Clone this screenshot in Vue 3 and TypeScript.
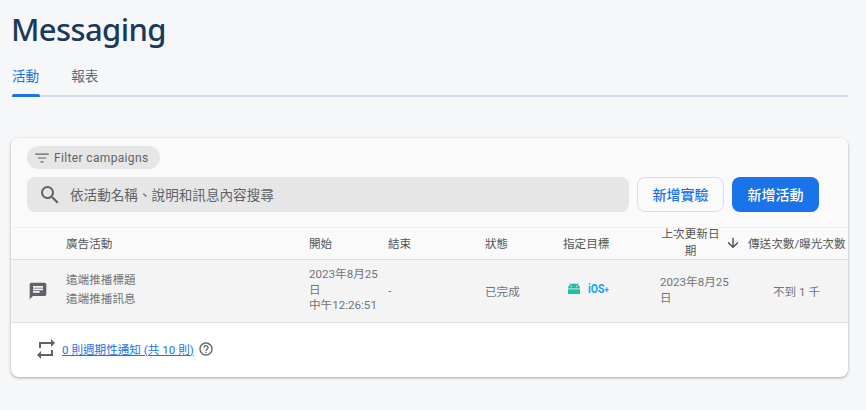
<script setup lang="ts">
const columns: string[] = ['', '廣告活動', '開始', '結束', '狀態', '指定目標']
</script>

<template>
  <div class="page">
    <h1 class="title">Messaging</h1>
    <nav class="tabs">
      <span class="tab active">活動</span>
      <span class="tab">報表</span>
    </nav>
    <section class="card">
      <div class="toolbar">
        <div class="chip">
          <svg width="18" height="18" viewBox="0 0 24 24" fill="#5f6368"><path d="M3 6h18v1.600H3zM6.500 11.200h11v1.600h-11zM10 16.400h4V18h-4z" /></svg>
          <span>Filter campaigns</span>
        </div>
        <div class="search-row">
          <div class="search">
            <svg width="24" height="24" viewBox="0 0 24 24" fill="#5f6368"><path d="M15.500 14h-.79l-.28-.27A6.470 6.470 0 0 0 16 9.500 6.500 6.500 0 1 0 9.500 16c1.610 0 3.090-.59 4.230-1.570l.27.28v.79l5 4.990L20.490 19l-4.990-5zm-6 0C7.010 14 5 11.990 5 9.500S7.010 5 9.500 5 14 7.010 14 9.500 11.990 14 9.500 14z" /></svg>
            <span class="search-text">依活動名稱、說明和訊息內容搜尋</span>
          </div>
          <button class="btn outline">新增實驗</button>
          <button class="btn solid">新增活動</button>
        </div>
      </div>
      <div class="grid head">
        <span v-for="(c, i) in columns" :key="i">{{ c }}</span>
        <span class="updated">
          <span class="updated-text">上次更新日期</span>
          <svg width="16" height="16" viewBox="0 0 24 24" fill="#444746"><path d="M20 12l-1.410-1.410L13 16.170V4h-2v12.170l-5.580-5.590L4 12l8 8 8-8z" /></svg>
        </span>
        <span class="sends">傳送次數/曝光次數</span>
      </div>
      <div class="grid row">
        <span class="msg-icon">
          <svg width="20" height="20" viewBox="0 0 24 24" fill="#5f6368"><path d="M20 2H4c-1.100 0-1.990.9-1.990 2L2 22l4-4h14c1.100 0 2-.9 2-2V4c0-1.100-.9-2-2-2zM6 9h12v2H6V9zm8 5H6v-2h8v2zm4-6H6V6h12v2z" /></svg>
        </span>
        <div class="names">
          <span>遠端推播標題</span>
          <span>遠端推播訊息</span>
        </div>
        <span class="date">2023年8月25日<br />中午12:26:51</span>
        <span>-</span>
        <span>已完成</span>
        <span class="platforms">
          <svg width="14" height="13" viewBox="0 0 14 13" fill="#1fbf9f">
            <path d="M1 6.400C1.100 4.700 2 3.300 3.400 2.500L2.500 1l.5-.3.9 1.500A6 6 0 0 1 7 1.600c1.100 0 2.200.2 3.100.6l.9-1.500.5.300-.9 1.500C12 3.300 12.900 4.700 13 6.400zM4.300 3.700a.7.7 0 1 0 0 1.400.7.7 0 0 0 0-1.400zm5.400 0a.7.7 0 1 0 0 1.400.7.7 0 0 0 0-1.400z" fill-rule="evenodd" />
            <path d="M1 7.300h12V12H1z" />
          </svg>
          <span class="ios">iOS<small>+</small></span>
        </span>
        <span class="date updated-cell">2023年8月25日</span>
        <span class="count">不到 1 千</span>
      </div>
      <div class="footer">
        <svg width="24" height="24" viewBox="0 0 24 24" fill="#5f6368"><path d="M7 7h10v3l4-4-4-4v3H5v6h2V7zm10 10H7v-3l-4 4 4 4v-3h12v-6h-2v4z" /></svg>
        <a class="link">0 則週期性通知 (共 10 則)</a>
        <svg width="16" height="16" viewBox="0 0 24 24" fill="#5f6368"><path d="M11 18h2v-2h-2v2zm1-16C6.480 2 2 6.480 2 12s4.480 10 10 10 10-4.480 10-10S17.520 2 12 2zm0 18c-4.410 0-8-3.590-8-8s3.590-8 8-8 8 3.590 8 8-3.590 8-8 8zm0-14c-2.210 0-4 1.790-4 4h2c0-1.100.9-2 2-2s2 .9 2 2c0 2-3 1.750-3 5h2c0-2.250 3-2.500 3-5 0-2.210-1.790-4-4-4z" /></svg>
      </div>
    </section>
  </div>
</template>

<style>
html, body { margin: 0; background: #f6f7f9; }
</style>

<style scoped>
.page {
  width: 866px;
  height: 410px;
  box-sizing: border-box;
  padding: 10px 18px 0 11px;
  overflow: hidden;
  background: #f6f7f9;
  font-family: Roboto, "Noto Sans CJK TC", sans-serif;
  color: #5f6368;
  font-size: 12px;
}
.title {
  margin: 0;
  font-family: "Noto Sans", sans-serif;
  font-weight: 500;
  font-size: 31px;
  letter-spacing: -0.6px;
  line-height: 38px;
  color: #1a3a5c;
}
.tabs {
  display: flex;
  gap: 32px;
  margin-top: 10px;
  margin-left: 1px;
  height: 37px;
  border-bottom: 2px solid #cfd9e8;
}
.tab {
  font-size: 13.600px;
  line-height: 37px;
  height: 37px;
  color: #5b6b7f;
}
.tab.active {
  color: #1a73e8;
  position: relative;
}
.tab.active::after {
  content: "";
  position: absolute;
  left: 0;
  right: -1px;
  bottom: -2px;
  height: 3px;
  border-radius: 2px 2px 0 0;
  background: #1a73e8;
}
.card {
  margin-top: 41px;
  width: 837px;
  height: 239px;
  background: #fff;
  border-radius: 8px;
  box-shadow: 0 1px 3px rgba(60, 64, 67, 0.45);
  overflow: hidden;
}
.toolbar {
  background: #fafafa;
  height: 90px;
  padding: 8px 29px 0 16px;
  box-sizing: border-box;
  border-bottom: 1px solid #f1f1f1;
}
.chip {
  display: flex;
  align-items: center;
  gap: 3px;
  height: 23px;
  width: 133px;
  box-sizing: border-box;
  padding-left: 6px;
  border-radius: 12px;
  background: #e6e6e6;
  font-size: 12px;
  font-weight: 400;
  letter-spacing: 0.35px;
  color: #5f6368;
}
.search-row {
  display: flex;
  gap: 8px;
  margin-top: 8px;
}
.search {
  flex: 0 0 602px;
  height: 35px;
  display: flex;
  align-items: center;
  gap: 8px;
  padding-left: 11px;
  box-sizing: border-box;
  border-radius: 8px;
  background: #e6e6e6;
  font-size: 13.600px;
  color: #5f6368;
}
.search-text {
  padding-bottom: 2px;
}
.btn {
  height: 35px;
  width: 87px;
  border-radius: 8px;
  font-family: inherit;
  font-size: 14px;
  font-weight: 500;
  padding: 0 0 2px;
}
.btn.outline {
  background: #fafafa;
  border: 1px solid #dadce0;
  color: #1a73e8;
}
.btn.solid {
  background: #1a73e8;
  border: 0;
  color: #fff;
}
.grid {
  display: grid;
  grid-template-columns: 55px 243px 79px 97px 78px 97px 87px 101px;
  align-items: center;
  box-sizing: border-box;
}
.head {
  height: 32px;
  grid-template-rows: 29px;
  background: #fafafa;
  border-bottom: 1px solid #e0e0e0;
  color: #555;
  font-size: 11.600px;
}
.updated {
  display: flex;
  align-items: center;
  gap: 4px;
}
.updated-text {
  width: 61px;
  text-align: center;
  line-height: 16.500px;
  flex: none;
}
.sends {
  white-space: nowrap;
  padding-left: 1px;
}
.row {
  height: 63px;
  padding-bottom: 1px;
  background: #f4f4f4;
  border-bottom: 1px solid #e0e0e0;
  font-size: 11.600px;
  color: #70757a;
}
.msg-icon {
  display: flex;
  padding-left: 17px;
}
.names {
  display: flex;
  flex-direction: column;
  gap: 3px;
  line-height: 16px;
  margin-top: -3px;
}
.date {
  line-height: 15.500px;
}
.platforms {
  display: flex;
  align-items: center;
  gap: 7px;
  padding-left: 4px;
  margin-top: -5px;
}
.ios {
  display: inline-block;
  font-weight: 700;
  font-size: 11px;
  color: #13a4ee;
  transform: scale(0.95, 1.2);
  transform-origin: left center;
}
.ios small {
  font-size: 8px;
}
.updated-cell {
  padding-right: 14px;
}
.count {
  padding-left: 26px;
}
.footer {
  display: flex;
  align-items: center;
  height: 54px;
  padding-left: 23px;
  box-sizing: border-box;
  padding-bottom: 3px;
}
.link {
  color: #1a73e8;
  text-decoration: underline;
  font-size: 11.600px;
  margin: 0 4px 0 4px;
}
</style>
